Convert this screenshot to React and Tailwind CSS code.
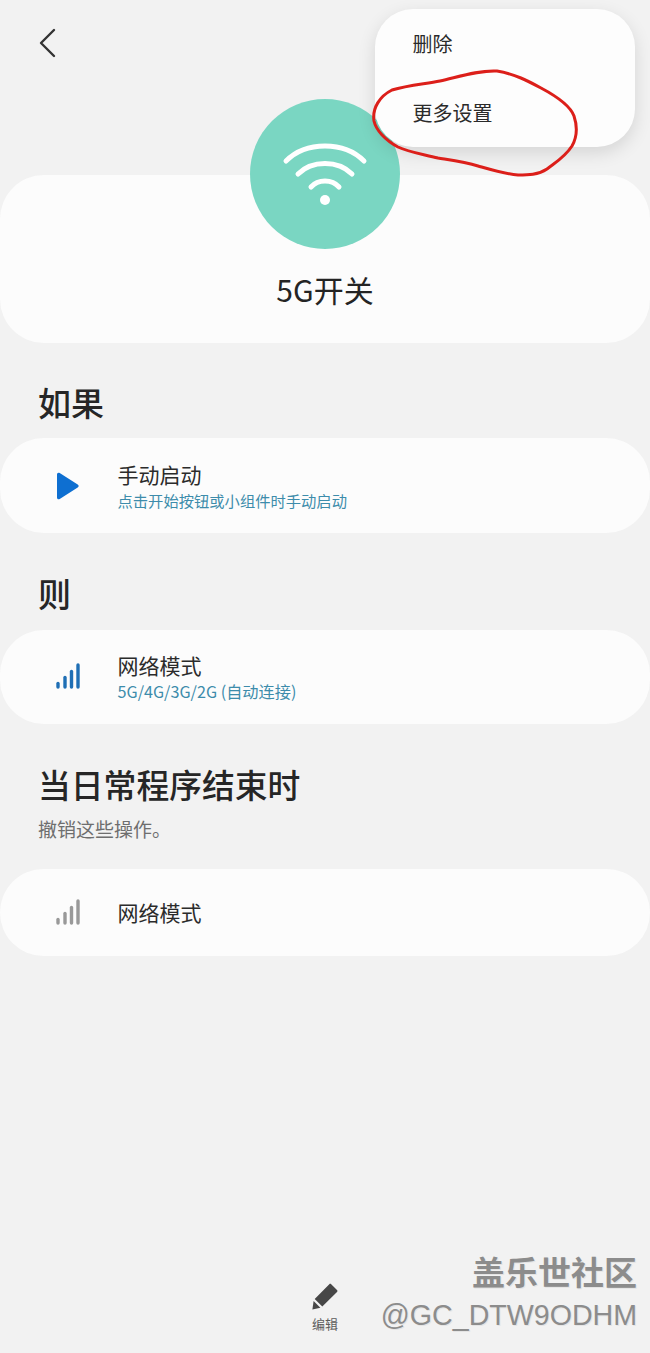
function Bars({ color }) {
  return (
    <svg className="-mt-[4px]" width="28" height="30" viewBox="0 0 28 30" fill="none" stroke={color} strokeWidth="3.4" strokeLinecap="round">
      <path d="M4 27v-3.5" />
      <path d="M11 27v-9.5" />
      <path d="M17.5 27v-15.5" />
      <path d="M24 27v-22" />
    </svg>
  );
}

function Row({ icon, title, sub, subClass, h }) {
  return (
    <div className={`flex items-center rounded-[44px] bg-[#fcfcfc] pl-[54px] ${h}`}>
      <div className="flex w-[63.5px] shrink-0 items-center">{icon}</div>
      <div className="flex flex-col pb-[2px]">
        <div className="text-[21px] leading-[28px] text-[#2b2b2b]">{title}</div>
        {sub && <div className={`mt-[2px] leading-[20px] text-[#3d8cab] ${subClass}`}>{sub}</div>}
      </div>
    </div>
  );
}

export default function App() {
  return (
    <div className="relative h-[1353px] w-[650px] overflow-hidden bg-[#f2f2f2] font-['Noto_Sans_CJK_SC','Noto_Sans',sans-serif]">
      <svg className="absolute left-[36px] top-[26px]" width="24" height="34" viewBox="0 0 24 34" fill="none" stroke="#333" strokeWidth="2.4" strokeLinecap="round" strokeLinejoin="round">
        <path d="M18 4 5 17l13 13" />
      </svg>

      <div className="mt-[175px] flex h-[168px] flex-col items-center rounded-[44px] bg-[#fcfcfc]">
        <div className="relative z-10 -mt-[76px] flex h-[150px] w-[150px] shrink-0 items-center justify-center rounded-full bg-[#7ad6c2]">
          <svg width="90" height="76" viewBox="0 0 90 76" fill="none" stroke="#fff" strokeWidth="5" strokeLinecap="round">
            <path d="M6 25C26 5 64 5 84 25" />
            <path d="M18 38C32 24 58 24 72 38" />
            <path d="M31 51C38 43 52 43 59 51" />
            <circle cx="45" cy="64" r="5" fill="#fff" stroke="none" />
          </svg>
        </div>
        <div className="mt-[20px] text-[30px] leading-[40px] text-[#242424]">5G开关</div>
      </div>

      <h2 className="mt-[36px] px-[38px] text-[33px] font-medium leading-[46px] text-[#262626]">如果</h2>
      <div className="mt-[13px]">
        <Row
          h="h-[95px]"
          title="手动启动"
          sub="点击开始按钮或小组件时手动启动"
          subClass="text-[15.3px]"
          icon={
            <svg width="26" height="30" viewBox="0 0 26 30">
              <path d="M3 3.500v23c0 1.600 1.300 2.300 2.700 1.500l18-11.500c1.300-.8 1.300-2.200 0-3L5.700 2C4.300 1.200 3 1.900 3 3.500Z" fill="#0e6fd1" />
            </svg>
          }
        />
      </div>

      <h2 className="mt-[37px] px-[38px] text-[33px] font-medium leading-[46px] text-[#262626]">则</h2>
      <div className="mt-[14px]">
        <Row h="h-[94px]" title="网络模式" sub="5G/4G/3G/2G (自动连接)" subClass="text-[16.2px]" icon={<Bars color="#1f6fb5" />} />
      </div>

      <h2 className="mt-[37px] px-[38px] text-[32.800px] font-medium leading-[46px] text-[#262626]">当日常程序结束时</h2>
      <p className="mt-[9px] px-[38px] text-[19px] leading-[26px] text-[#6e6e6e]">撤销这些操作。</p>
      <div className="mt-[27px]">
        <Row h="h-[87px]" title="网络模式" icon={<Bars color="#999999" />} />
      </div>

      {/* overflow menu */}
      <div className="absolute left-[375px] top-[9px] z-20 flex h-[138px] w-[260px] flex-col justify-center gap-[41px] rounded-[38px] bg-[#fdfdfd] pl-[37.5px] text-[20px] leading-[28px] text-[#2a2a2a] shadow-[0_6px_18px_rgba(0,0,0,0.12)]">
        <div>删除</div>
        <div>更多设置</div>
      </div>

      {/* hand-drawn annotation */}
      <svg className="absolute left-0 top-0 z-30" width="650" height="200" viewBox="0 0 650 200" fill="none" stroke="#dc1f1a" strokeWidth="3" strokeLinecap="round" strokeLinejoin="round">
        <path d="M392 90C408 85 425 84 440 81C458 77 478 70 497 71C515 74 528 81 541 88C556 96 570 105 574 116C578 128 577 137 572 146C565 157 556 162 547 169C538 175 528 175 518 175C505 174 492 170 478 166C465 162 450 160 438 158C422 154 408 152 398 147C385 140 376 130 374 121C372 108 380 96 392 90Z" />
      </svg>

      {/* bottom action */}
      <div className="absolute left-[300px] top-[1282px] flex w-[50px] flex-col items-center">
        <svg width="28" height="28" viewBox="0 0 28 28">
          <path d="M20.200 2.300 26 7.900c.6.6.6 1.400 0 2L11.300 24.600 3.700 17 18.300 2.300c.5-.6 1.300-.6 1.900 0Z" fill="#474747" />
          <path d="M2.600 19 9.400 25.700 1.400 27.600Z" fill="#474747" />
        </svg>
        <div className="mt-[5px] text-[13px] leading-[18px] text-[#5c5c5c]">编辑</div>
      </div>

      {/* watermark */}
      <div className="absolute right-[13px] top-[1250px] flex flex-col items-end text-[#8c8c8c] [text-shadow:1px_1px_0_#e4e4e4]">
        <div className="text-[33px] font-bold leading-[42px]">盖乐世社区</div>
        <div className="mt-[5px] font-['Liberation_Sans',sans-serif] text-[28.600px] leading-[36px]">@GC_DTW9ODHM</div>
      </div>
    </div>
  );
}
